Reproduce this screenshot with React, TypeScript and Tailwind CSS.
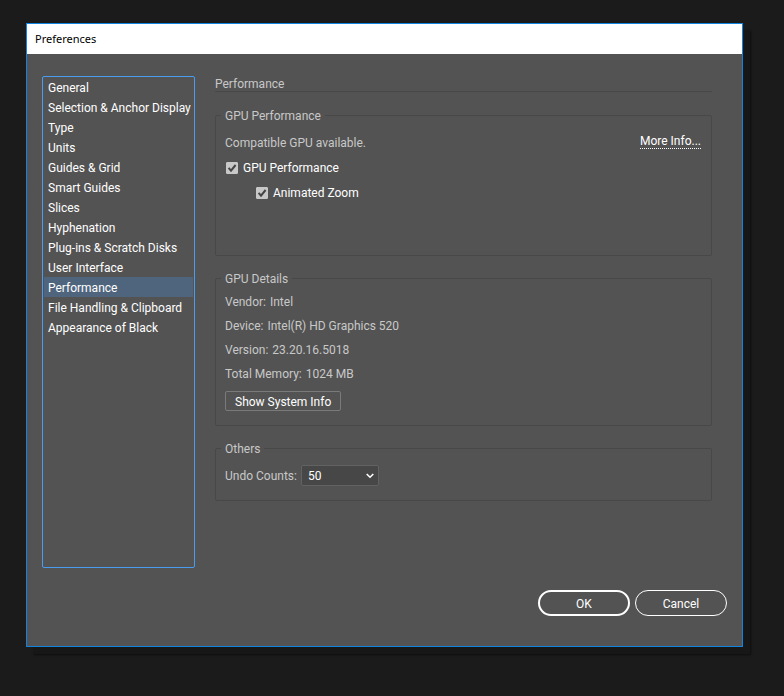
import { useState } from 'react';

const sections = [
  'General',
  'Selection & Anchor Display',
  'Type',
  'Units',
  'Guides & Grid',
  'Smart Guides',
  'Slices',
  'Hyphenation',
  'Plug-ins & Scratch Disks',
  'User Interface',
  'Performance',
  'File Handling & Clipboard',
  'Appearance of Black',
];

const gpuDetails = [
  { label: 'Vendor:', value: 'Intel' },
  { label: 'Device:', value: 'Intel(R) HD Graphics 520' },
  { label: 'Version:', value: '23.20.16.5018' },
  { label: 'Total Memory:', value: '1024 MB' },
];

interface CheckProps {
  label: string;
  checked: boolean;
  onChange: (checked: boolean) => void;
}

function Check({ label, checked, onChange }: CheckProps) {
  return (
    <label className="flex items-center gap-1 text-white w-fit">
      <span className="relative w-[14px] h-3 pl-px">
        <input
          type="checkbox"
          checked={checked}
          onChange={e => onChange(e.target.checked)}
          className="peer appearance-none block w-3 h-3 rounded-[1px] border border-[#c8c8c8] checked:bg-[#c8c8c8]"
        />
        <svg viewBox="0 0 12 12" className="absolute left-px top-0 w-3 h-3 pointer-events-none opacity-0 peer-checked:opacity-100">
          <path d="M2.6 5.8 L5 8.6 L9.6 3" fill="none" stroke="#454545" strokeWidth="2" />
        </svg>
      </span>
      {label}
    </label>
  );
}

function Group({ title, children }: { title: string; children: React.ReactNode }) {
  return (
    <fieldset className="border border-[#484848] rounded-[2px] px-[9px] pb-[14px] min-w-0">
      <legend className="px-1 -ml-1 h-4 leading-[18px]">{title}</legend>
      {children}
    </fieldset>
  );
}

function App() {
  const [active, setActive] = useState('Performance');
  const [gpu, setGpu] = useState(true);
  const [zoom, setZoom] = useState(true);
  const [undo, setUndo] = useState('50');

  return (
    <div className="min-h-screen bg-[#1b1b1b] flex flex-col pt-[23px] pr-[41px] pb-[49px] pl-[26px] font-['Roboto','Noto_Sans',sans-serif] text-[12px] leading-5 text-[#c8c8c8]">
      <div role="dialog" aria-label="Preferences" className="flex-1 flex flex-col border border-[#1383e0] bg-[#535353] shadow-[7px_7px_0_0_#171717,8px_8px_2px_0_#0e0e0e]">
        {/* Title bar */}
        <header className="h-[30px] shrink-0 bg-white px-2 flex items-center text-black text-[11px] font-['Noto_Sans',sans-serif]">
          <h1>Preferences</h1>
        </header>

        <div className="flex-1 flex gap-5 pt-[22px] pl-[15px] pr-[30px]">
          {/* Section list */}
          <nav className="w-[153px] shrink-0 border border-[#4a9cf0] rounded-[2px] px-px">
            <ul>
              {sections.map(s => (
                <li key={s}>
                  <button
                    onClick={() => setActive(s)}
                    className={`block w-full h-5 px-1 pt-0.5 text-left text-white whitespace-nowrap leading-[18px] ${active === s ? 'bg-[#4f657d]' : ''}`}
                  >
                    {s}
                  </button>
                </li>
              ))}
            </ul>
          </nav>

          {/* Active section */}
          <main className="flex-1 min-w-0">
            <h2 className="h-4 leading-4 border-b border-[#484848]">{active}</h2>

            <div className="flex flex-col gap-[14px] pt-[15px]">
              <Group title="GPU Performance">
                <div className="flex justify-between pt-[10px]">
                  <p>Compatible GPU available.</p>
                  <a href="#" className="mr-px h-4 leading-4 border-b border-dotted border-white text-white">More Info...</a>
                </div>
                <div className="flex flex-col gap-[5px] pt-[5px] pb-[38px]">
                  <Check label="GPU Performance" checked={gpu} onChange={setGpu} />
                  <div className="pl-[30px]">
                    <Check label="Animated Zoom" checked={zoom} onChange={setZoom} />
                  </div>
                </div>
              </Group>

              <Group title="GPU Details">
                <dl className="flex flex-col gap-1 pt-[6px]">
                  {gpuDetails.map(d => (
                    <div key={d.label} className="flex gap-1">
                      <dt>{d.label}</dt>
                      <dd>{d.value}</dd>
                    </div>
                  ))}
                </dl>
                <button className="block mt-[7px] h-5 px-[9px] pt-0.5 leading-4 border border-[#7a7a7a] rounded-[2px] text-white">
                  Show System Info
                </button>
              </Group>

              <Group title="Others">
                <div className="flex items-center gap-1 pt-[9px]">
                  <label htmlFor="undo">Undo Counts:</label>
                  <div className="relative">
                    <select
                      id="undo"
                      value={undo}
                      onChange={e => setUndo(e.target.value)}
                      className="appearance-none block w-[78px] h-[21px] pl-[6px] border border-[#626262] rounded-[2px] bg-[#474747] text-white"
                    >
                      <option>50</option>
                      <option>100</option>
                      <option>200</option>
                    </select>
                    <svg viewBox="0 0 8 6" className="absolute right-[5px] top-[8px] w-2 h-[6px] pointer-events-none">
                      <path d="M0.7 1 L4 4.2 L7.3 1" fill="none" stroke="#fff" strokeWidth="1.6" />
                    </svg>
                  </div>
                </div>
              </Group>
            </div>
          </main>
        </div>

        <footer className="flex justify-end gap-[5px] pt-[22px] pr-[15px] pb-[30px] text-white">
          <button className="w-[92px] h-[26px] pt-0.5 rounded-full border-2 border-white">OK</button>
          <button className="w-[92px] h-[26px] pt-0.5 rounded-full border border-white">Cancel</button>
        </footer>
      </div>
    </div>
  );
}

export default App;
